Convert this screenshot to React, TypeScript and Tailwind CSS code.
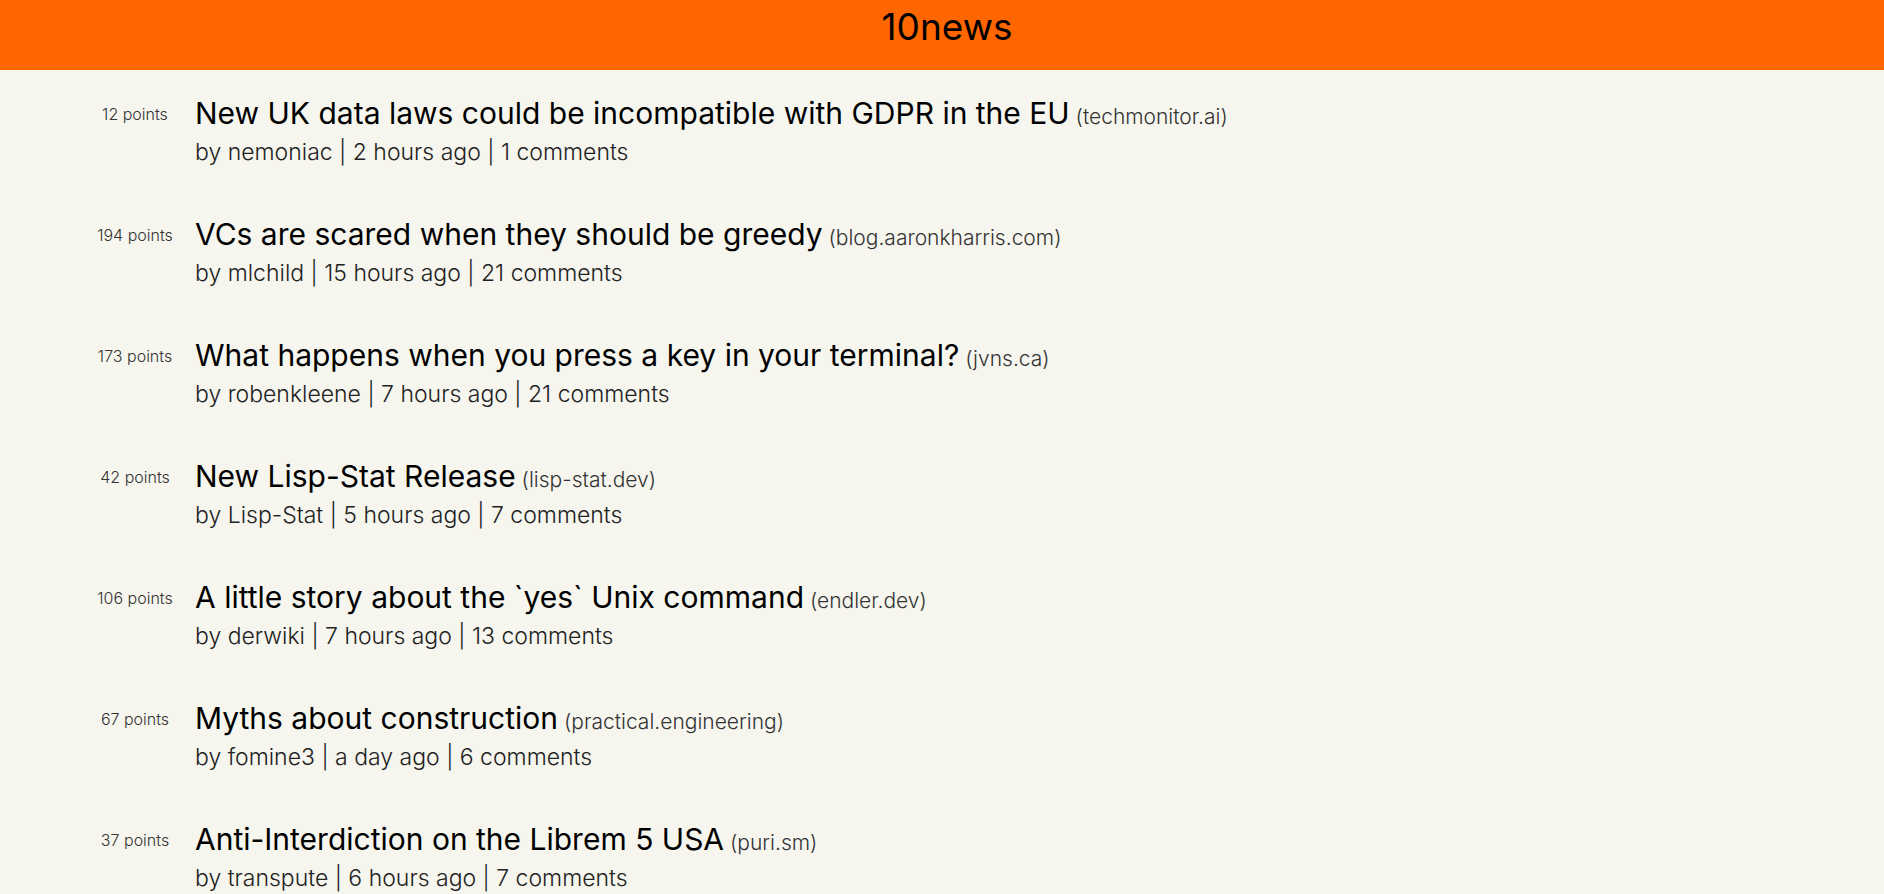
import React from "react";

type Story = {
    points: number;
    title: string;
    domain: string;
    by: string;
    time: string;
    comments: number;
};

const stories: Story[] = [
    { points: 12, title: "New UK data laws could be incompatible with GDPR in the EU", domain: "techmonitor.ai", by: "nemoniac", time: "2 hours ago", comments: 1 },
    { points: 194, title: "VCs are scared when they should be greedy", domain: "blog.aaronkharris.com", by: "mlchild", time: "15 hours ago", comments: 21 },
    { points: 173, title: "What happens when you press a key in your terminal?", domain: "jvns.ca", by: "robenkleene", time: "7 hours ago", comments: 21 },
    { points: 42, title: "New Lisp-Stat Release", domain: "lisp-stat.dev", by: "Lisp-Stat", time: "5 hours ago", comments: 7 },
    { points: 106, title: "A little story about the `yes` Unix command", domain: "endler.dev", by: "derwiki", time: "7 hours ago", comments: 13 },
    { points: 67, title: "Myths about construction", domain: "practical.engineering", by: "fomine3", time: "a day ago", comments: 6 },
    { points: 37, title: "Anti-Interdiction on the Librem 5 USA", domain: "puri.sm", by: "transpute", time: "6 hours ago", comments: 7 },
];

function StoryRow({ story }: { story: Story }) {
    return (
        <li className="flex pb-[43px]">
            <div className="w-[120px] ml-[75px] shrink-0 text-center text-[16px] font-light leading-[36px] text-[#333]">
                {story.points} points
            </div>
            <div>
                <div className="h-[34px] text-[30px] leading-[34px] whitespace-nowrap">
                    <a href="#" className="text-black">{story.title}</a>
                    <span className="text-[21px] leading-none font-light text-[#333]"> ({story.domain})</span>
                </div>
                <div className="h-[44px] text-[23px] font-light leading-[44px] text-[#222]">
                    by {story.by} | {story.time} | {story.comments} comments
                </div>
            </div>
        </li>
    );
}

export default function App() {
    return (
        <div className="min-h-screen bg-[#f6f6ef]" style={{ fontFamily: "Inter, 'Open Sans', sans-serif" }}>
            <header className="h-[70px] bg-[#ff6600] flex justify-center pt-[6px]">
                <h1 className="ml-[10px] text-[37px] leading-[42px] text-black">10news</h1>
            </header>
            <ul className="pt-[26px]">
                {stories.map(s => (
                    <StoryRow key={s.title} story={s} />
                ))}
            </ul>
        </div>
    );
}
